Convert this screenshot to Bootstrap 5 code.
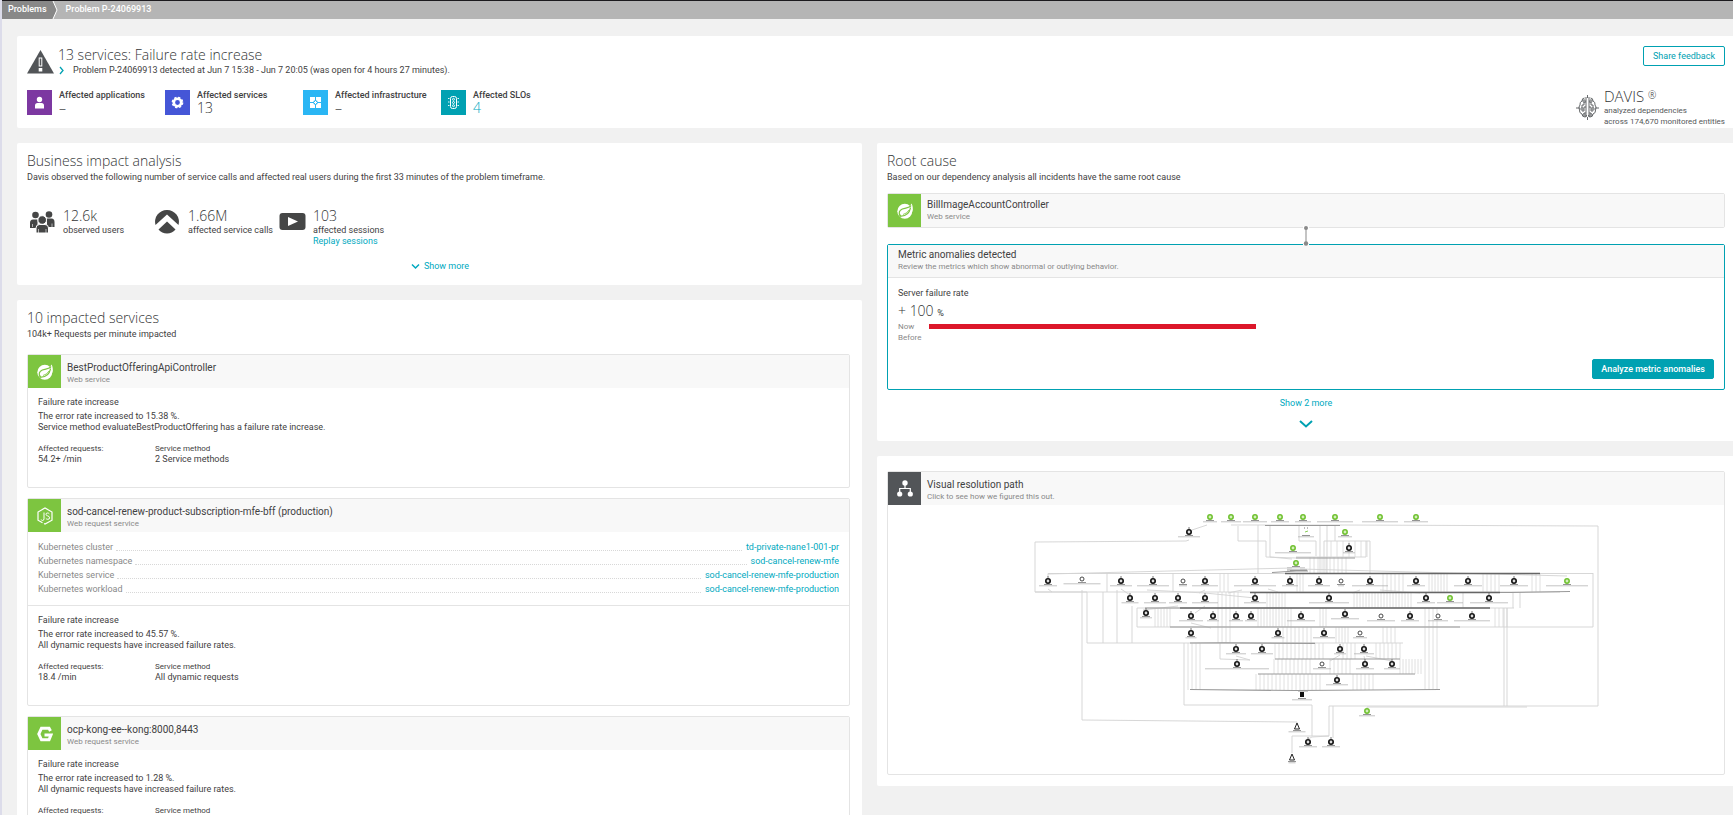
<!DOCTYPE html>
<html lang="en">
<head>
<meta charset="utf-8">
<meta name="viewport" content="width=device-width, initial-scale=1">
<title>Problem P-24069913</title>
<link href="https://cdn.jsdelivr.net/npm/bootstrap@5.3.0/dist/css/bootstrap.min.css" rel="stylesheet">
<style>
  :root { --teal: #00a1b2; --link: #00a9c0; --ink: #3f4142; --muted: #898989; --line: #e4e4e4; --leaf: #7dc540; }
  body { font: 9px/11px Roboto, "Liberation Sans", sans-serif; color: var(--ink); background: #f1f1f1; }
  a { color: var(--link); text-decoration: none; }
  svg { display: block; flex: none; }
  .shell { height: 100vh; overflow: hidden; border-left: 2px solid #dcdcea; }
  .topbar { height: 19px; background: #b5b5b5; border-top: 1px solid #1c1a1e; color: #fff; font-weight: 500; }
  .topbar a, .topbar span { color: #fff; line-height: 16px; }
  .crumb-first { background: #888; padding: 0 4px 0 6px; }
  .crumb-current { margin-left: 7px; }
  .content-area { padding: 17px 0 0 15px; }
  .panel { background: #fff; border-radius: 2px 0 0 2px; padding: 9px 8px 13px 10px; }
  .summary { padding-top: 10px; padding-bottom: 0; }
  .col-left { flex: 845 1 0; min-width: 0; }
  .col-left .panel { padding-right: 12px; border-radius: 2px; }
  .col-right { flex: 856 1 0; min-width: 0; }
  .cols { gap: 15px; margin-top: 15px; }
  .stack { gap: 15px; }
  h1, h2, .figure-num { font: 300 14px/18px "Open Sans", Roboto, sans-serif; margin: 0; color: #333536; }
  h1, h2 { margin-bottom: 1px; }
  h2 { margin-bottom: 2px; }
  h3 { font-size: 10px; line-height: 12px; font-weight: 400; margin: 0; }
  h4 { font-size: 9px; line-height: 11px; font-weight: 400; margin: 0 0 3px; }
  .tiny { font-size: 8px; line-height: 11px; }
  .unit { font: 400 9px Roboto, sans-serif; }
  .muted { color: var(--muted); }
  .btn { --bs-btn-font-size: 9px; --bs-btn-line-height: 18px; --bs-btn-padding-y: 0; --bs-btn-border-radius: 2px; }
  .btn-feedback { --bs-btn-color: var(--teal); --bs-btn-border-color: var(--teal); --bs-btn-padding-x: 9px; --bs-btn-hover-bg: var(--teal); --bs-btn-hover-color: #fff; }
  .btn-analyze { --bs-btn-bg: var(--teal); --bs-btn-color: #fff; --bs-btn-border-color: var(--teal); --bs-btn-padding-x: 8px; --bs-btn-font-weight: 500; }
  .btn-plain { color: var(--link); border: 0; --bs-btn-line-height: 11px; --bs-btn-padding-x: 0; }
  .btn-expand { gap: 11px; }
  .summary-title { padding-left: 4px; }
  .kpis { margin-top: 14px; margin-bottom: 13px; }
  .kpi { width: 138px; gap: 7px; font-weight: 500; }
  .kpi .figure-num { line-height: 14px; }
  .kpi-tile { width: 25px; height: 25px; }
  .davis { gap: 5px; padding-bottom: 1px; color: #55585a; font-size: 8px; line-height: 11px; }
  .davis-name { font: 300 15px/18px "Open Sans", Roboto, sans-serif; color: #333536; }
  .davis-name sup { font-size: 10px; top: -3px; }
  .impact { margin-top: 24px; }
  .impact-item { width: 125px; }
  .impact-icon { width: 36px; padding: 3px 0 0 1px; }
  .impact-more { padding: 14px 0 0 3px; }
  .entity-list { gap: 10px; margin-top: 14px; }
  .entity { border: 1px solid var(--line); border-radius: 2px; }
  .entity-head { background: #f8f8f8; height: 33px; }
  .entity-icon { width: 33px; height: 33px; background: var(--leaf); }
  .entity-title { padding: 7px 0 0 6px; }
  .entity-body { padding: 9px 10px 22px; }
  .facts { margin-top: 10px; }
  .facts > div { width: 117px; }
  .facts dt { font-weight: 400; margin-bottom: 0; }
  .facts dd, .facts, .props { margin-bottom: 0; }
  .props { padding: 8px 10px 9px; line-height: 14px; border-bottom: 1px solid var(--line); }
  .props dt { font-weight: 400; color: var(--muted); }
  .props dd { margin: 0; }
  .leader { border-bottom: 1px dotted #d8d8d8; height: 11px; margin: 0 4px 0 3px; }
  .cause { margin-top: 10px; }
  .cause .entity-title { padding-top: 5px; }
  .connector { margin: -2px auto; position: relative; z-index: 1; }
  .metric { border: 1px solid var(--teal); border-radius: 2px; }
  .metric-head { background: #f8f8f8; border-bottom: 1px solid var(--line); padding: 4px 10px 5px; }
  .metric-body { padding: 10px; }
  .metric-body .figure-num { line-height: 17px; margin-bottom: 2px; }
  .bar-label { width: 31px; }
  .bar-fill { height: 5px; background: #dc172a; }
  .dark-icon { background: #525558; }
  .resolution { padding-top: 15px; padding-bottom: 11px; }
</style>
</head>
<body>
<svg width="0" height="0" class="position-absolute" aria-hidden="true">
  <symbol id="spring" viewBox="0 0 16 16">
    <circle cx="7.800" cy="8.200" r="7.500" fill="#fff"/>
    <path fill="#fff" d="M14.600 .6c1 2 1.600 5 1 8l-3-5z"/>
    <path fill="none" stroke="#7dc540" stroke-width="1.200" d="M2.200 12.900c5 .7 9.800-1.100 11.400-8.200M14 2.600C12.400 6 6 4.200 3.300 7.400c-1.600 1.800-1.300 4.300.3 5.200"/>
    <path fill="none" stroke="#7dc540" stroke-width=".8" d="M6 11.500q4-1 6-4.500"/>
    <circle cx="3.300" cy="13" r=".8" fill="#7dc540"/>
  </symbol>
</svg>

<div class="shell">
  <nav class="topbar d-flex" aria-label="Breadcrumb">
    <a class="crumb-first" href="#">Problems</a>
    <svg width="8" height="18" viewBox="0 0 8 18"><path d="M0 0h2l4 9-4 9H0z" fill="#888"/><path d="M2 0l4 9-4 9" fill="none" stroke="#fff" stroke-width="1"/></svg>
    <span class="crumb-current">Problem P-24069913</span>
  </nav>

  <main class="content-area">
    <header class="panel summary d-flex justify-content-between">
      <div>
        <div class="d-flex">
          <svg class="mt-1" width="27" height="24" viewBox="0 0 27 24"><path d="M13.500 0L27 23.500H0z" fill="#525558"/><path d="M11.700 7.500h3.600v9h-3.600zM11.700 18h3.600v3.500h-3.600z" fill="#fff"/><path d="M12.700 8.500h1.600v7h-1.600z" fill="#525558"/></svg>
          <div class="summary-title">
            <h1>13 services: Failure rate increase</h1>
            <div class="d-flex align-items-center"><svg width="15" height="9" viewBox="0 0 15 9"><path d="M2 1l3 3.500L2 8" fill="none" stroke="#00a1b2" stroke-width="1.300"/></svg>Problem P-24069913 detected at Jun 7 15:38 - Jun 7 20:05 (was open for 4 hours 27 minutes).</div>
          </div>
        </div>
        <div class="kpis d-flex">
          <div class="kpi d-flex">
            <svg class="kpi-tile" viewBox="0 0 25 25"><path fill="#7c38a1" d="M0 0h25v25H0z"/><circle cx="12.500" cy="9.500" r="2.700" fill="#fff"/><path fill="#fff" d="M8 18.500v-3q0-2.500 2.500-2.500h4q2.500 0 2.500 2.500v3z"/></svg>
            <div>Affected applications<div class="figure-num">–</div></div>
          </div>
          <div class="kpi d-flex">
            <svg class="kpi-tile" viewBox="0 0 25 25"><path fill="#4556d7" d="M0 0h25v25H0z"/><circle cx="12.500" cy="12.500" r="3.700" fill="none" stroke="#fff" stroke-width="2.600"/><circle cx="12.500" cy="12.500" r="5.200" fill="none" stroke="#fff" stroke-width="1.300" stroke-dasharray="2.300 1.780"/></svg>
            <div>Affected services<div class="figure-num">13</div></div>
          </div>
          <div class="kpi d-flex">
            <svg class="kpi-tile" viewBox="0 0 25 25"><path fill="#2ab6f4" d="M0 0h25v25H0z"/><path fill="#fff" d="M7 7h5v5H7zM13 7h5v5h-5zM7 13h5v5H7zM13 13h5v5h-5z"/><circle cx="12.500" cy="12.500" r="2.300" fill="#2ab6f4"/><path stroke="#fff" d="M11 12.500h3M12.500 11v3"/></svg>
            <div>Affected infrastructure<div class="figure-num">–</div></div>
          </div>
          <div class="kpi d-flex">
            <svg class="kpi-tile" viewBox="0 0 25 25"><path fill="#00a1b2" d="M0 0h25v25H0z"/><rect x="9.500" y="6.500" width="6" height="12" rx="2" fill="none" stroke="#fff"/><g fill="none" stroke="#fff" stroke-width=".9"><circle cx="12.500" cy="9.300" r="1"/><circle cx="12.500" cy="12.500" r="1"/><circle cx="12.500" cy="15.700" r="1"/><path d="M7 8.500h1.500M7 12h1.500M7 15.500h1.500M16.500 8.500H18M16.500 12H18M16.500 15.500H18"/></g></svg>
            <div>Affected SLOs<div class="figure-num"><a href="#">4</a></div></div>
          </div>
        </div>
      </div>
      <div class="d-flex flex-column justify-content-between align-items-end">
        <button type="button" class="btn btn-feedback">Share feedback</button>
        <div class="davis d-flex align-items-center">
          <svg width="23" height="27" viewBox="0 0 23 27" fill="none" stroke="#55585a" stroke-width=".9"><path d="M10 3v20M13 3v20M11.500 1v3M11.500 23v3M8.500 4Q6 4 6 7 3.500 8 4 11q-2 2-.5 5-.5 3 2.500 4 0 3 3 3 1.500 0 1.500-2M14.500 4Q17 4 17 7q2.500 1 2 4 2 2 .5 5 .5 3-2.500 4 0 3-3 3-1.500 0-1.500-2M0 14h4M19 14h4M10 8H8v3H6v3M13 8h2v3h2v3M10 13H8v4H6M13 13h2v4h2M10 19H8v2M13 19h2v2"/><g fill="#fff"><circle cx="8" cy="7" r="1.200"/><circle cx="15" cy="7" r="1.200"/><circle cx="6" cy="15" r="1.200"/><circle cx="17" cy="15" r="1.200"/><circle cx="8" cy="21" r="1.200"/><circle cx="15" cy="21" r="1.200"/></g></svg>
          <div><div class="davis-name">DAVIS <sup>®</sup></div>analyzed dependencies<br>across 174,670 monitored entities</div>
        </div>
      </div>
    </header>

    <div class="cols d-flex">
      <div class="col-left d-flex flex-column stack">
        <section class="panel">
          <h2>Business impact analysis</h2>
          <div>Davis observed the following number of service calls and affected real users during the first 33 minutes of the problem timeframe.</div>
          <div class="impact d-flex">
            <div class="impact-item d-flex">
              <div class="impact-icon"><svg width="28" height="24" viewBox="0 0 28 24" fill="#454646"><circle cx="7.500" cy="5" r="3.300"/><circle cx="21" cy="4.500" r="3.300"/><path d="M2 18v-5q0-3.500 3-3.500h4.500V18zM26.500 17v-5q0-3.500-3-3.500H19V17z"/><circle cx="14.200" cy="10" r="4.300" stroke="#fff"/><path stroke="#fff" d="M8 23v-5q0-3.500 3.500-3.500h5.500q3.500 0 3.500 3.500v5z"/><path stroke="#fff" stroke-width=".6" d="M10.500 19v4M18 19v4M4.500 14v3M24 13.500V17"/></svg></div>
              <div><div class="figure-num">12.6k</div>observed users</div>
            </div>
            <div class="impact-item d-flex">
              <div class="impact-icon"><svg width="26" height="26" viewBox="0 0 26 26" fill="#454646"><path d="M2.500 15A11.800 11.800 0 0 1 14 0a11.800 11.800 0 0 1 11.500 15L14 4.500z"/><path d="M5.500 19.500L14 11.500l8.500 8A11.500 11.500 0 0 1 14 23.500a11.500 11.500 0 0 1-8.500-4z"/></svg></div>
              <div class="text-nowrap"><div class="figure-num">1.66M</div>affected service calls</div>
            </div>
            <div class="impact-item d-flex">
              <div class="impact-icon"><svg width="28" height="24" viewBox="0 0 28 24"><rect x="1.500" y="3" width="26" height="17" rx="3" fill="#454646"/><path d="M10 7v9l10-4.500z" fill="#fff"/></svg></div>
              <div class="text-nowrap"><div class="figure-num">103</div>affected sessions<br><a href="#">Replay sessions</a></div>
            </div>
          </div>
          <div class="impact-more d-flex justify-content-center"><button type="button" class="btn btn-plain d-flex align-items-center gap-1"><svg width="9" height="7" viewBox="0 0 9 7"><path d="M1 1.500L4.500 5 8 1.500" fill="none" stroke="#00a9c0" stroke-width="1.500"/></svg>Show more</button></div>
        </section>

        <section class="panel">
          <h2>10 impacted services</h2>
          <div>104k+ Requests per minute impacted</div>
          <div class="entity-list d-flex flex-column">
            <article class="entity">
              <div class="entity-head d-flex">
                <div class="entity-icon d-flex align-items-center justify-content-center"><svg width="16" height="16"><use href="#spring"/></svg></div>
                <div class="entity-title"><h3>BestProductOfferingApiController</h3><div class="tiny muted">Web service</div></div>
              </div>
              <div class="entity-body">
                <h4>Failure rate increase</h4>
                <div>The error rate increased to 15.38 %.<br>Service method evaluateBestProductOffering has a failure rate increase.</div>
                <dl class="facts d-flex"><div><dt class="tiny">Affected requests:</dt><dd>54.2+ /min</dd></div><div><dt class="tiny">Service method</dt><dd>2 Service methods</dd></div></dl>
              </div>
            </article>

            <article class="entity">
              <div class="entity-head d-flex">
                <div class="entity-icon d-flex align-items-center justify-content-center"><svg width="16" height="18" viewBox="0 0 16 18" fill="none" stroke="#fff" stroke-width="1.200"><path d="M5.500 15.800L1 13.200V5L8 1l7 4v8.200L8 17l-1-.5"/><path d="M7 5.500v6.300q0 1.700-1.500 1.700-1 0-1.300-1M12.300 6.800Q11.500 6 10.600 6 9 6 9 7.300 9 8.500 10.700 8.900q1.900.4 1.900 2 0 1.400-1.800 1.400-1.300 0-2-1" stroke-width="1"/></svg></div>
                <div class="entity-title"><h3>sod-cancel-renew-product-subscription-mfe-bff (production)</h3><div class="tiny muted">Web request service</div></div>
              </div>
              <dl class="props">
                <div class="d-flex"><dt>Kubernetes cluster</dt><span class="leader flex-grow-1"></span><dd><a href="#">td-private-nane1-001-pr</a></dd></div>
                <div class="d-flex"><dt>Kubernetes namespace</dt><span class="leader flex-grow-1"></span><dd><a href="#">sod-cancel-renew-mfe</a></dd></div>
                <div class="d-flex"><dt>Kubernetes service</dt><span class="leader flex-grow-1"></span><dd><a href="#">sod-cancel-renew-mfe-production</a></dd></div>
                <div class="d-flex"><dt>Kubernetes workload</dt><span class="leader flex-grow-1"></span><dd><a href="#">sod-cancel-renew-mfe-production</a></dd></div>
              </dl>
              <div class="entity-body">
                <h4>Failure rate increase</h4>
                <div>The error rate increased to 45.57 %.<br>All dynamic requests have increased failure rates.</div>
                <dl class="facts d-flex"><div><dt class="tiny">Affected requests:</dt><dd>18.4 /min</dd></div><div><dt class="tiny">Service method</dt><dd>All dynamic requests</dd></div></dl>
              </div>
            </article>

            <article class="entity">
              <div class="entity-head d-flex">
                <div class="entity-icon d-flex align-items-center justify-content-center"><svg width="16" height="16" viewBox="0 0 16 16" fill="none" stroke="#fff" stroke-width="3"><path d="M13.500 5L12 2.200H4.500L1.800 8l2.700 5.800h7.500L14 9H7.500"/></svg></div>
                <div class="entity-title"><h3>ocp-kong-ee--kong:8000,8443</h3><div class="tiny muted">Web request service</div></div>
              </div>
              <div class="entity-body">
                <h4>Failure rate increase</h4>
                <div>The error rate increased to 1.28 %.<br>All dynamic requests have increased failure rates.</div>
                <dl class="facts d-flex"><div><dt class="tiny">Affected requests:</dt></div><div><dt class="tiny">Service method</dt></div></dl>
              </div>
            </article>
          </div>
        </section>
      </div>

      <div class="col-right d-flex flex-column stack">
        <section class="panel">
          <h2>Root cause</h2>
          <div>Based on our dependency analysis all incidents have the same root cause</div>
          <div class="entity cause">
            <div class="entity-head d-flex">
              <div class="entity-icon d-flex align-items-center justify-content-center"><svg width="16" height="16"><use href="#spring"/></svg></div>
              <div class="entity-title"><h3>BillImageAccountController</h3><div class="tiny muted">Web service</div></div>
            </div>
          </div>
          <svg class="connector" width="6" height="20" viewBox="0 0 6 20"><path d="M0 0h6v3H0zM0 17h6v2H0z" fill="#fff"/><path d="M3 2v16" stroke="#898989"/><circle cx="3" cy="2" r="2" fill="#898989"/><circle cx="3" cy="17.500" r="2.200" fill="#898989"/></svg>
          <div class="metric">
            <div class="metric-head"><h3>Metric anomalies detected</h3><div class="tiny muted">Review the metrics which show abnormal or outlying behavior.</div></div>
            <div class="metric-body">
              <h4>Server failure rate</h4>
              <div class="figure-num">+ 100 <span class="unit">%</span></div>
              <div class="d-flex align-items-center tiny muted"><span class="bar-label">Now</span><span class="flex-grow-1"><span class="bar-fill d-block" style="width:41.600%"></span></span></div>
              <div class="tiny muted">Before</div>
              <div class="d-flex justify-content-end mt-3"><button type="button" class="btn btn-analyze">Analyze metric anomalies</button></div>
            </div>
          </div>
          <div class="d-flex justify-content-center pt-2"><button type="button" class="btn btn-plain btn-expand d-flex flex-column align-items-center">Show 2 more<svg width="14" height="8" viewBox="0 0 14 8"><path d="M1 1l6 5.500L13 1" fill="none" stroke="#00a1b2" stroke-width="2"/></svg></button></div>
        </section>

        <section class="panel resolution">
          <div class="entity">
            <div class="entity-head d-flex">
              <div class="entity-icon dark-icon d-flex align-items-center justify-content-center"><svg width="16" height="17" viewBox="0 0 16 17" fill="#fff"><circle cx="8" cy="3" r="2.700"/><circle cx="2.700" cy="14" r="2.600"/><circle cx="13.300" cy="14" r="2.600"/><path d="M8 4v4.500M2.700 13V8.500h10.600V13" fill="none" stroke="#fff" stroke-width="1.200"/></svg></div>
              <div class="entity-title"><h3>Visual resolution path</h3><div class="tiny muted">Click to see how we figured this out.</div></div>
            </div>
            <svg id="path-map" width="100%" height="269" viewBox="888 505 836 269" role="img" aria-label="Resolution path graph"></svg>
          </div>
        </section>
      </div>
    </div>
  </main>
</div>

<script src="https://cdn.jsdelivr.net/npm/bootstrap@5.3.0/dist/js/bootstrap.bundle.min.js"></script>
<script>
  // Nodes of the resolution path: x, y, kind, caption width. Kinds: k black, g green, o open, t triangle, s square, d dots
  const nodes = [
    [1210,517,'g',14],[1231,517,'g',20],[1255,517,'g',24],[1280,517,'g',18],[1303,517,'g',16],[1335,517,'g',36],[1380,517,'g',36],[1416,517,'g',24],
    [1189,532,'k',22],[1306,532,'d',16],[1345,532,'g',14],[1349,548,'k',12],[1293,548,'g',36],[1296,563,'g',18],
    [1048,581,'k',18],[1082,579,'o',37],[1121,581,'k',22],[1153,581,'k',32],[1183,581,'o',8],[1205,581,'k',26],[1255,581,'k',42],[1290,581,'k',16],
    [1319,581,'k',22],[1341,581,'o',6],[1370,581,'k',36],[1416,581,'k',18],[1468,581,'k',28],[1514,581,'k',28],[1567,581,'g',42],
    [1130,598,'k',17],[1155,598,'k',22],[1178,598,'k',18],[1205,598,'k',26],[1255,598,'k',22],[1329,598,'k',40],[1426,598,'k',18],[1450,598,'g',26],[1489,598,'k',38],
    [1146,613,'k',12],[1191,616,'k',24],[1213,616,'k',12],[1236,616,'k',14],[1251,616,'k',12],[1301,616,'k',28],[1345,614,'k',28],[1381,616,'o',28],[1410,616,'k',18],[1438,616,'o',20],[1472,616,'k',36],
    [1191,633,'k',11],[1278,633,'k',13],[1324,633,'k',22],[1360,633,'o',14],
    [1236,649,'k',20],[1262,649,'k',22],[1340,649,'k',12],[1364,649,'k',20],
    [1237,664,'k',64],[1322,664,'o',18],[1365,664,'k',18],[1392,664,'k',16],
    [1337,680,'k',22],[1302,695,'s',20],[1367,711,'g',16],[1297,727,'t',17],[1308,742,'k',18],[1331,742,'k',18],[1292,758,'t',7]
  ];
  // Single connectors
  const wires = `M1207 525l-15 5M1189 540l-3 1-151 1V592H1087V643H1403M1082 590V720l215 2v3M1103 592V643M1117 590V643M1132 606V643
    M1107 592V573M1173 573V592M1231 525H1340l258 1V706H1329V736H1292V753M1238 526V541H1266V557l30 1M1258 525V573M1270 526V557l22 2
    M1299 526V541H1316V556M1320 526V573M1327 526V573M1335 526V541M1324 573V541H1370V573M1366 541V557H1296M1593 573V627H1137V608
    M1048 577V573.500H1593M1035 592H1560M1137 608H1514M1513 592V608M1520 592V608M1463 592V608M1184 643V705H1312V736M1333 738V706M1308 739l4-2 17-1M1367 709v-2h160
    M1220 643V659l30 1-14-4M1504 608V706M1507 608V706M1048 589l4 3M1121 589l9 6M1147 590l58 3 50 5M1205 590l-6 3M1242 590l-14 3M1268 589l10 3
    M1178 606l-35 4M1205 606l-10 7M1191 623l20 5M1360 590l-8 3M1380 590l40 3M1340 655l-10 6M1364 656l1 5M1366 656l26 5M1292 568l-244 6M1300 569l267 7`;
  const dark = `M1265 525.500H1340M1296 558H1355M1272 572.500l24-1.500M1340 592.500H1510l60-1M1145 608H1180M1170 627H1460
    M1190 643l35-.2 90 .6M1190 689.500l105 1 145-1M1258 674H1415M1275 659H1400M1290 571h18M1287 570h20M1298 691h10`;
  const trunks = 'M1285 573.500H1540M1180 608H1490M1250 592.500H1500';
  // Bundles of parallel verticals: first x, last x, step, top, bottom
  const bundles = [
    [1220,1228,4,573,592],[1297,1303,3,573,592],[1383,1403,4,573,592],[1429,1447,3,573,592],[1483,1500,4,573,592],[1532,1540,4,573,592],
    [1310,1346,4,557,573],[1331,1368,6,541,557],[1218,1240,4,592,608],[1267,1285,3,592,608],[1354,1412,3,592,608],
    [1155,1172,3,608,627],[1218,1232,4,608,627],[1258,1292,3,608,627],[1320,1326,3,608,627],[1495,1507,4,608,627],
    [1218,1230,4,627,643],[1283,1312,4,627,643],[1336,1350,3,627,643],[1383,1395,4,627,643],[1425,1440,4,608,690],
    [1188,1200,4,643,690],[1275,1325,4,643,659],[1343,1356,4,643,659],[1376,1403,4,643,659],
    [1274,1312,4,659,674],[1330,1352,4,659,674],[1400,1422,3,659,674],[1256,1322,4,674,690],[1353,1373,4,674,690]
  ];
  const bundlePath = bundles.map(([a, b, s, t, e]) => {
    let d = '';
    for (let x = a; x <= b; x += s) d += `M${x} ${t}V${e}`;
    return d;
  }).join('');
  const glyphs = {
    k: (x, y) => `<circle cx="${x}" cy="${y}" r="2.200" fill="#ddd" stroke="#111" stroke-width="1.600"/><path d="M${x} ${y - 5}v2" stroke="#777"/>`,
    g: (x, y) => `<circle cx="${x}" cy="${y}" r="2.200" fill="#d4efbc" stroke="#6dc02c" stroke-width="1.500"/>`,
    o: (x, y) => `<circle cx="${x}" cy="${y}" r="2" fill="#fff" stroke="#333" stroke-width=".9"/>`,
    t: (x, y) => `<path d="M${x} ${y - 4}l2.500 6h-5z" fill="#fff" stroke="#222"/>`,
    s: (x, y) => `<path d="M${x - 2} ${y - 3}h4v5h-4z" fill="#111"/>`,
    d: (x, y) => `<path d="M${x - 2} ${y - 4}h1m2 0h1" stroke="#777"/><path d="M${x - 1} ${y}l3-1" stroke="#8c5"/>`
  };
  document.getElementById('path-map').innerHTML =
    `<g fill="none"><path d="${bundlePath}" stroke="#ddd" stroke-width=".9"/><path d="${wires}" stroke="#d2d2d2" stroke-width=".9"/><path d="${dark}" stroke="#999" stroke-width="1.200"/><path d="${trunks}" stroke="#666" stroke-width="1.600"/></g>` +
    nodes.map(([x, y, kind, w]) => glyphs[kind](x, y) +
      `<path d="M${x - 4} ${y + 3.500}h8" stroke="#777" stroke-width=".8"/><path d="M${x - w / 2} ${y + 4.800}h${w}" stroke="#aaa" stroke-width=".7"/>`).join('');
</script>
</body>
</html>
